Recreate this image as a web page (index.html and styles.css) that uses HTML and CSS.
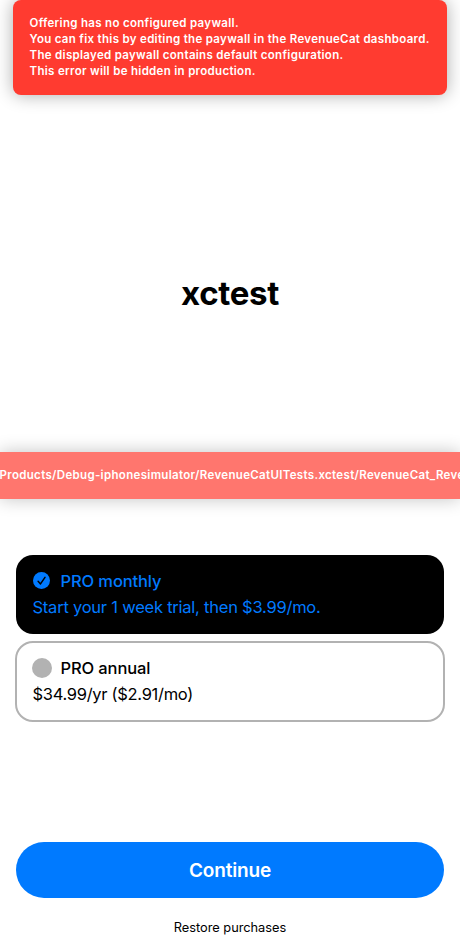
FILE: index.html
```
<!DOCTYPE html>
<html lang="en">
<head>
<meta charset="utf-8">
<title>Paywall</title>
<link rel="stylesheet" href="styles.css">
</head>
<body>
<main class="paywall">
  <section class="error">
    <p>Offering has no configured paywall.</p>
    <p>You can fix this by editing the paywall in the RevenueCat dashboard.</p>
    <p>The displayed paywall contains default configuration.</p>
    <p>This error will be hidden in production.</p>
  </section>
  <h1 class="title">xctest</h1>
  <div class="path">Products/Debug-iphonesimulator/RevenueCatUITests.xctest/RevenueCat_Reve</div>
  <section class="plans">
    <div class="plan selected">
      <div class="head">
        <svg class="mark" viewBox="0 0 20 20"><circle cx="9.5" cy="9.6" r="8.5" fill="#007aff"/><path d="M6.1 10.2 8.5 12.9 13 6.4" fill="none" stroke="#000" stroke-width="1.5" stroke-linecap="round" stroke-linejoin="round"/></svg>
        <span class="name">PRO monthly</span>
      </div>
      <div class="price">Start your 1 week trial, then $3.99/mo.</div>
    </div>
    <div class="plan">
      <div class="head">
        <svg class="mark" viewBox="0 0 20 20"><circle cx="10" cy="10" r="10" fill="#b2b2b2"/></svg>
        <span class="name">PRO annual</span>
      </div>
      <div class="price">$34.99/yr ($2.91/mo)</div>
    </div>
  </section>
  <button class="continue">Continue</button>
  <a class="restore">Restore purchases</a>
</main>
</body>
</html>
```
FILE: styles.css
```
* { box-sizing: border-box; }
body { margin: 0; background: #fff; color: #000; font-family: Inter, sans-serif; }
.paywall { width: 460px; height: 950px; display: flex; flex-direction: column; overflow: hidden; }
.error { margin: 0 13px; height: 95px; padding: 15px 16.5px; background: #ff3b30; border-radius: 8px; box-shadow: 0 0 18px rgba(0,0,0,.33); color: #fff; font-size: 11.5px; font-weight: 600; letter-spacing: .31px; line-height: 16px; white-space: nowrap; }
.error p { margin: 0; }
.title { margin: 178px 0 0; height: 40px; line-height: 40px; font-size: 33px; font-weight: 700; letter-spacing: -.35px; text-align: center; }
.path { margin-top: 139px; height: 47px; line-height: 46px; background: #ff766e; box-shadow: 0 0 18px rgba(0,0,0,.24); color: #fff; font-size: 11.5px; font-weight: 600; letter-spacing: .33px; white-space: nowrap; overflow: hidden; text-indent: -.5px; }
.plans { margin: 56px 15px 0; display: flex; flex-direction: column; gap: 7px; }
.plan { height: 81px; padding: 15px; border: 2px solid #b2b2b2; border-radius: 18px; font-size: 16.5px; }
.plan.selected { height: 79px; margin: 0 1px; padding: 16px; border: 0; background: #000; color: #007aff; border-radius: 17px; }
.head { display: flex; align-items: center; height: 20px; gap: 8.5px; }
.mark { width: 20px; height: 20px; }
.name { font-weight: 500; letter-spacing: -.12px; }
.price { margin: 6px 0 0 .5px; line-height: 20px; letter-spacing: -.23px; }
.plan:not(.selected) .price { letter-spacing: -.3px; }
.continue { margin: 120px 16px 0; height: 56px; border: 0; border-radius: 28px; background: #007aff; color: #fff; font: 600 19px Inter, sans-serif; letter-spacing: -.15px; }
.restore { margin-top: 20px; text-align: center; font-size: 12.8px; line-height: 20px; letter-spacing: -.02px; }
```
